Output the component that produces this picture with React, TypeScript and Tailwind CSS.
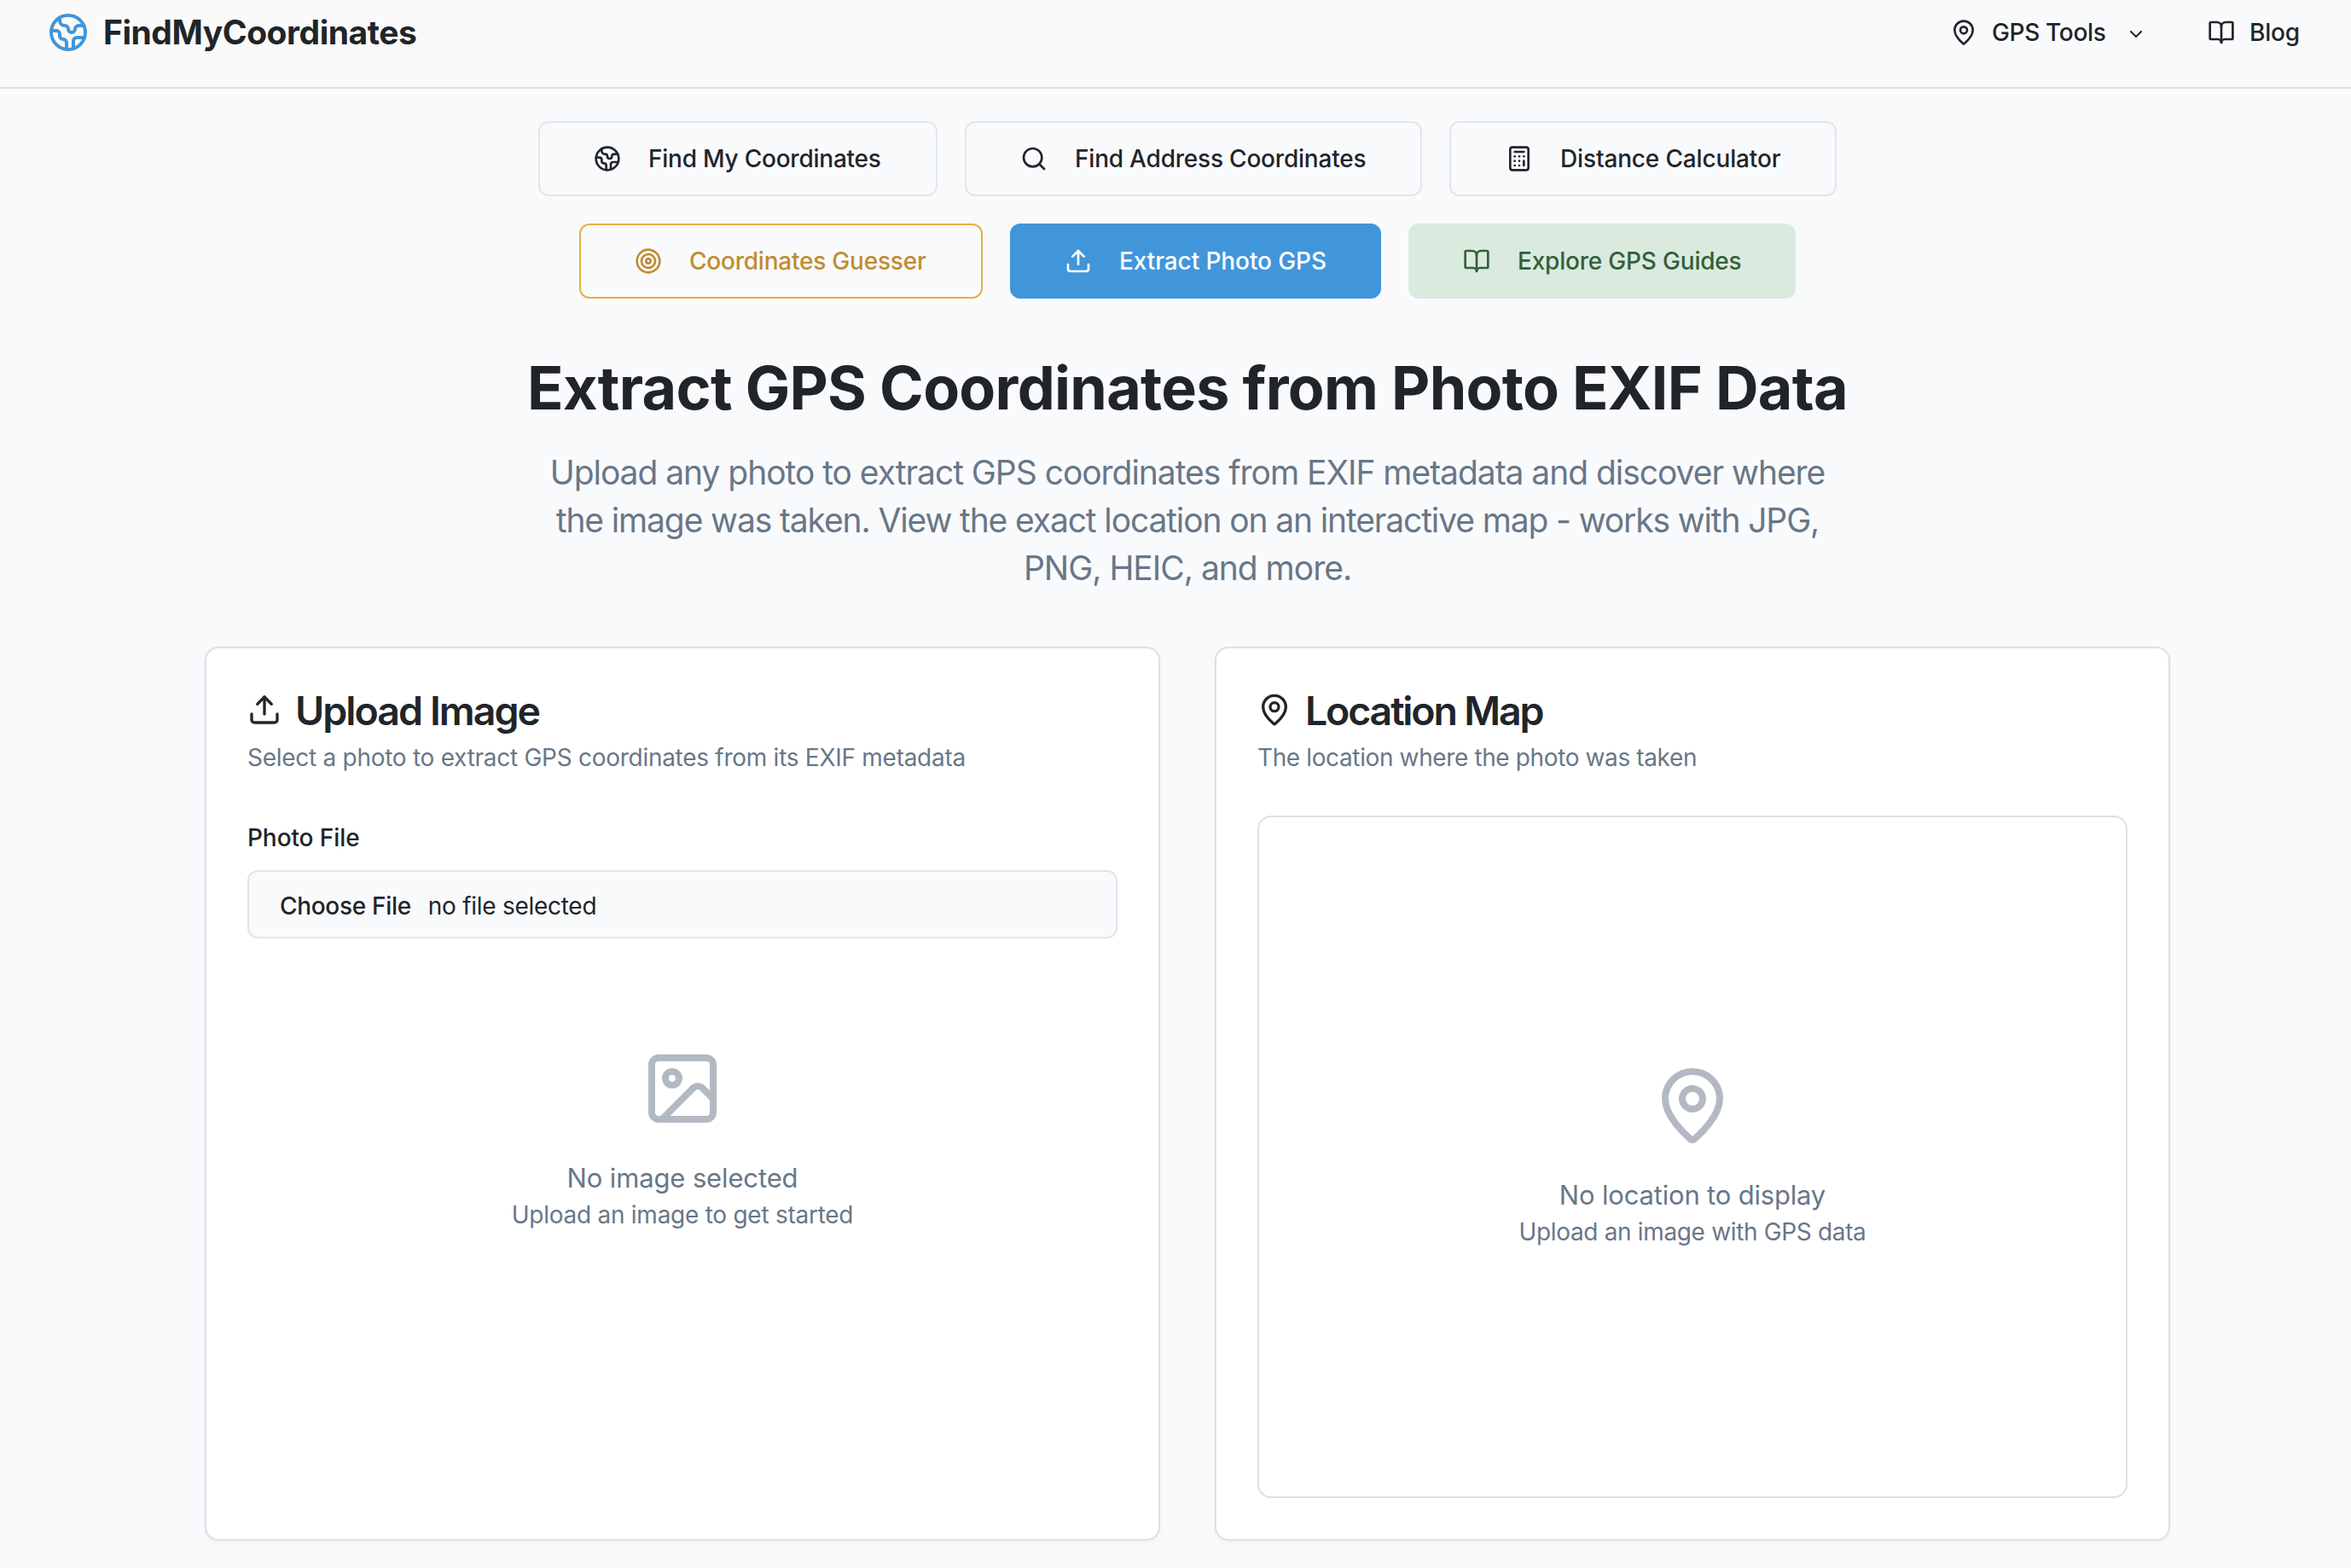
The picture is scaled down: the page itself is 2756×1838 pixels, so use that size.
import type { ReactNode } from "react";
import {
  BookOpen,
  Calculator,
  ChevronDown,
  Earth,
  Image as ImageIcon,
  MapPin,
  Search,
  Target,
  Upload,
} from "lucide-react";

function ToolButton({
  icon,
  className,
  children,
}: {
  icon: ReactNode;
  className: string;
  children: ReactNode;
}) {
  return (
    <button
      className={`flex h-[88px] items-center gap-8 rounded-[12px] border-2 text-[28px] leading-[42px] font-medium whitespace-nowrap ${className}`}
    >
      {icon}
      <span>{children}</span>
    </button>
  );
}

function Card({
  icon,
  title,
  description,
  children,
}: {
  icon: ReactNode;
  title: ReactNode;
  description: ReactNode;
  children: ReactNode;
}) {
  return (
    <section className="flex h-[1048px] flex-1 flex-col rounded-[16px] border-2 border-[#dce0e7] bg-white p-12 shadow-[0_2px_4px_rgba(0,0,0,0.05)]">
      <h2 className="flex h-12 items-center gap-4 text-[46.5px] leading-[48px] font-semibold">
        {icon}
        {title}
      </h2>
      <p className="mt-3 text-[28px] leading-[40px] text-[#687788]">{description}</p>
      {children}
    </section>
  );
}

function EmptyState({
  icon,
  title,
  hint,
}: {
  icon: ReactNode;
  title: ReactNode;
  hint: ReactNode;
}) {
  return (
    <div className="flex flex-col items-center text-[#687788]">
      {icon}
      <p className="mt-[33px] text-[31px] leading-[47px]">{title}</p>
      <p className="text-[28px] leading-[40px]">{hint}</p>
    </div>
  );
}

export default function App() {
  return (
    <div className="h-[1838px] w-[2756px] overflow-hidden bg-[#f9fafc] font-['Inter','Liberation_Sans',sans-serif] text-[#212529]">
      <header className="flex h-[104px] items-start justify-between border-b-2 border-[#dcdfe6] bg-[#fafafa] pr-8 pl-14">
        <div className="flex h-[76px] items-center gap-[17px]">
          <Earth className="size-12 text-[#4196da]" />
          <span className="text-[39px] font-bold tracking-[-0.46px]">FindMyCoordinates</span>
        </div>
        <nav className="flex gap-4 text-[28px] leading-[42px] font-medium">
          <button className="flex h-20 items-center bg-[#f9fafc] px-7 pb-1">
            <MapPin className="size-8" />
            <span className="ml-[17px] w-[133px] tracking-[-0.34px] whitespace-nowrap">
              GPS Tools
            </span>
            <ChevronDown className="mt-1 ml-6 size-6" />
          </button>
          <a className="flex h-20 items-center gap-[17px] bg-[#f9fafc] pr-[27px] pb-1 pl-7">
            <BookOpen className="size-8" />
            <span className="w-[60px] tracking-[-0.2px]">Blog</span>
          </a>
        </nav>
      </header>

      <main className="flex flex-col items-center pl-7">
        <div className="mt-[38px] flex gap-8">
          <ToolButton
            icon={<Earth className="size-8 shrink-0" />}
            className="w-[468px] border-[#e1e6ea] pl-[63px] tracking-[-0.23px]"
          >
            Find My Coordinates
          </ToolButton>
          <ToolButton
            icon={<Search className="size-8 shrink-0" />}
            className="w-[536px] border-[#e1e6ea] pl-[63px] tracking-[-0.21px]"
          >
            Find Address Coordinates
          </ToolButton>
          <ToolButton
            icon={<Calculator className="size-8 shrink-0" />}
            className="w-[454px] border-[#e1e6ea] pl-[64px] tracking-[-0.15px]"
          >
            Distance Calculator
          </ToolButton>
        </div>
        <div className="mt-8 flex gap-8">
          <ToolButton
            icon={<Target className="size-8 shrink-0" />}
            className="w-[473px] border-[#e3b144] pl-[63px] tracking-[-0.22px] text-[#c18c30]"
          >
            Coordinates Guesser
          </ToolButton>
          <ToolButton
            icon={<Upload className="size-8 shrink-0" />}
            className="w-[435px] border-[#4196da] bg-[#4196da] pl-[62px] tracking-[-0.1px] text-white"
          >
            Extract Photo GPS
          </ToolButton>
          <ToolButton
            icon={<BookOpen className="size-8 shrink-0" />}
            className="w-[454px] border-[#daeadf] bg-[#daeadf] pl-[62px] tracking-[-0.2px] text-[#335f38]"
          >
            Explore GPS Guides
          </ToolButton>
        </div>

        <h1 className="mt-16 text-[70px] leading-[81px] font-bold tracking-[-0.72px] whitespace-nowrap">
          Extract GPS Coordinates from Photo EXIF Data
        </h1>
        <p className="mt-[31px] text-center text-[39px] leading-[56px] whitespace-nowrap text-[#687788]">
          <span className="tracking-[-1.037px]">
            Upload any photo to extract GPS coordinates from EXIF metadata and discover where
          </span>
          <br />
          <span className="tracking-[-1.13px]">
            the image was taken. View the exact location on an interactive map - works with JPG,
          </span>
          <br />
          <span className="tracking-[-1.015px]">PNG, HEIC, and more.</span>
        </p>

        <div className="mt-16 flex w-[2304px] gap-16">
          <Card
            icon={<Upload className="size-10" />}
            title={<span className="pt-[2px] tracking-[-1.96px]">Upload Image</span>}
            description={
              <span className="tracking-[-0.275px]">
                Select a photo to extract GPS coordinates from its EXIF metadata
              </span>
            }
          >
            <label className="mt-[60px] text-[28px] leading-[28px] font-medium tracking-[-0.09px]">
              Photo File
            </label>
            <div className="mt-6 flex h-20 items-center rounded-[12px] border-2 border-[#e1e5ea] bg-[#f9fafc] pt-[4px] pl-[36px] text-[28px]">
              <span className="font-medium tracking-[-0.31px]">Choose File</span>
              <span className="ml-[20px] tracking-[-0.28px]">no file selected</span>
            </div>
            <div className="mt-32">
              <EmptyState
                icon={<ImageIcon className="size-24 text-[#b2b9c2]" />}
                title={<span className="tracking-[-0.136px]">No image selected</span>}
                hint={<span className="tracking-[-0.26px]">Upload an image to get started</span>}
              />
            </div>
          </Card>
          <Card
            icon={<MapPin className="size-10" />}
            title={<span className="pt-[2px] tracking-[-2.18px]">Location Map</span>}
            description={
              <span className="tracking-[-0.38px]">The location where the photo was taken</span>
            }
          >
            <div className="mt-12 flex h-[800px] items-center justify-center rounded-[16px] border-2 border-[#dbe0e6]">
              <EmptyState
                icon={<MapPin className="size-24 text-[#b2b9c2]" />}
                title={<span className="tracking-[-0.185px]">No location to display</span>}
                hint={<span className="tracking-[-0.34px]">Upload an image with GPS data</span>}
              />
            </div>
          </Card>
        </div>
      </main>
    </div>
  );
}
